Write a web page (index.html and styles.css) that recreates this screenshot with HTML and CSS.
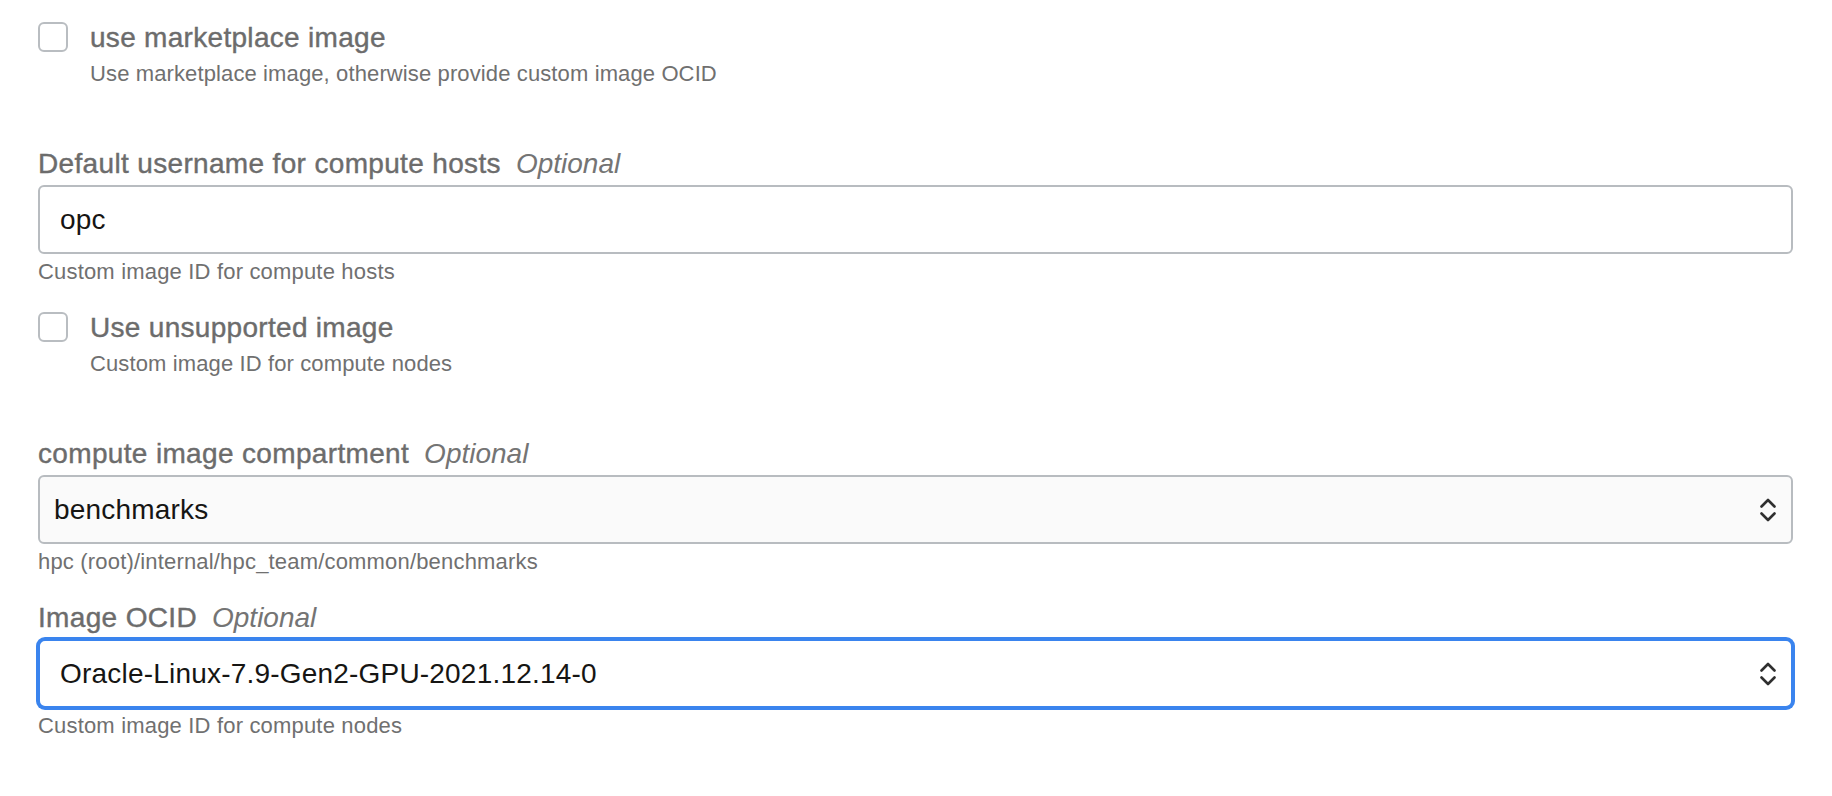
FILE: index.html
```html
<!DOCTYPE html>
<html lang="en">
<head>
<meta charset="utf-8">
<title>Compute image settings</title>
<link rel="stylesheet" href="styles.css">
</head>
<body>
<form class="form">
  <div class="check-field gap-large">
    <span class="checkbox"></span>
    <div class="check-text">
      <span class="check-label">use marketplace image</span>
      <span class="check-desc">Use marketplace image, otherwise provide custom image OCID</span>
    </div>
  </div>

  <div class="field">
    <div class="label">Default username for compute hosts<span class="optional">Optional</span></div>
    <div class="input"><span class="value">opc</span></div>
    <div class="help">Custom image ID for compute hosts</div>
  </div>

  <div class="check-field gap-large">
    <span class="checkbox"></span>
    <div class="check-text">
      <span class="check-label">Use unsupported image</span>
      <span class="check-desc">Custom image ID for compute nodes</span>
    </div>
  </div>

  <div class="field">
    <div class="label">compute image compartment<span class="optional">Optional</span></div>
    <div class="select select-muted">
      <span class="value">benchmarks</span>
      <svg class="chevrons" width="16" height="26" viewBox="0 0 16 26"><path d="M1.5 9.5 L8 3 L14.5 9.5 M1.5 16.5 L8 23 L14.5 16.5" fill="none" stroke="#2f2f2f" stroke-width="2.6" stroke-linecap="round" stroke-linejoin="round"/></svg>
    </div>
    <div class="help">hpc (root)/internal/hpc_team/common/benchmarks</div>
  </div>

  <div class="field">
    <div class="label">Image OCID<span class="optional">Optional</span></div>
    <div class="select select-focused">
      <span class="value">Oracle-Linux-7.9-Gen2-GPU-2021.12.14-0</span>
      <svg class="chevrons" width="16" height="26" viewBox="0 0 16 26"><path d="M1.5 9.5 L8 3 L14.5 9.5 M1.5 16.5 L8 23 L14.5 16.5" fill="none" stroke="#2f2f2f" stroke-width="2.6" stroke-linecap="round" stroke-linejoin="round"/></svg>
    </div>
    <div class="help">Custom image ID for compute nodes</div>
  </div>
</form>
</body>
</html>
```

FILE: styles.css
```css
html, body {
  margin: 0;
  padding: 0;
  background: #ffffff;
}

body {
  font-family: "Liberation Sans", Arial, sans-serif;
  color: #161513;
}

.form {
  display: flex;
  flex-direction: column;
  padding: 22px 39px 0 38px;
}

/* checkbox rows */
.check-field {
  display: flex;
  align-items: flex-start;
  gap: 22px;
}

.gap-large {
  margin-bottom: 61px;
}

.checkbox {
  flex: none;
  width: 30px;
  height: 30px;
  box-sizing: border-box;
  border: 2px solid #b9bdc1;
  border-radius: 6px;
  background: #ffffff;
}

.check-text {
  display: flex;
  flex-direction: column;
}

.check-label {
  font-size: 28px;
  line-height: 32px;
  letter-spacing: 0.3px;
  color: #6c6c6c;
  -webkit-text-stroke: 0.4px #6c6c6c;
}

.check-desc {
  margin-top: 7px;
  font-size: 22px;
  line-height: 26px;
  letter-spacing: 0.12px;
  color: #707070;
}

/* text / select fields */
.field {
  display: flex;
  flex-direction: column;
  margin-bottom: 27px;
}

.label {
  font-size: 28px;
  line-height: 32px;
  letter-spacing: 0.34px;
  color: #6c6c6c;
  -webkit-text-stroke: 0.4px #6c6c6c;
  margin-bottom: 5px;
}

.optional {
  margin-left: 15px;
  font-style: italic;
  letter-spacing: 0;
  color: #747474;
  -webkit-text-stroke: 0;
}

.input,
.select {
  display: flex;
  align-items: center;
  height: 69px;
  box-sizing: border-box;
  border: 2px solid #b8bcc0;
  border-radius: 6px;
  background: #ffffff;
}

.input {
  padding: 0 20px;
}

.select {
  padding: 0 15px 0 14px;
}

.select-muted {
  background: #fafafa;
}

.select-focused {
  padding-left: 20px;
  border-color: #3a84ee;
  box-shadow: 0 0 0 2px #3a84ee;
  border-radius: 7px;
}

.value {
  flex: 1;
  font-size: 28px;
  line-height: 32px;
  letter-spacing: 0.2px;
  color: #161513;
}

.chevrons {
  flex: none;
  display: block;
}

.help {
  margin-top: 5px;
  font-size: 22px;
  line-height: 26px;
  letter-spacing: 0.18px;
  color: #707070;
}
```
